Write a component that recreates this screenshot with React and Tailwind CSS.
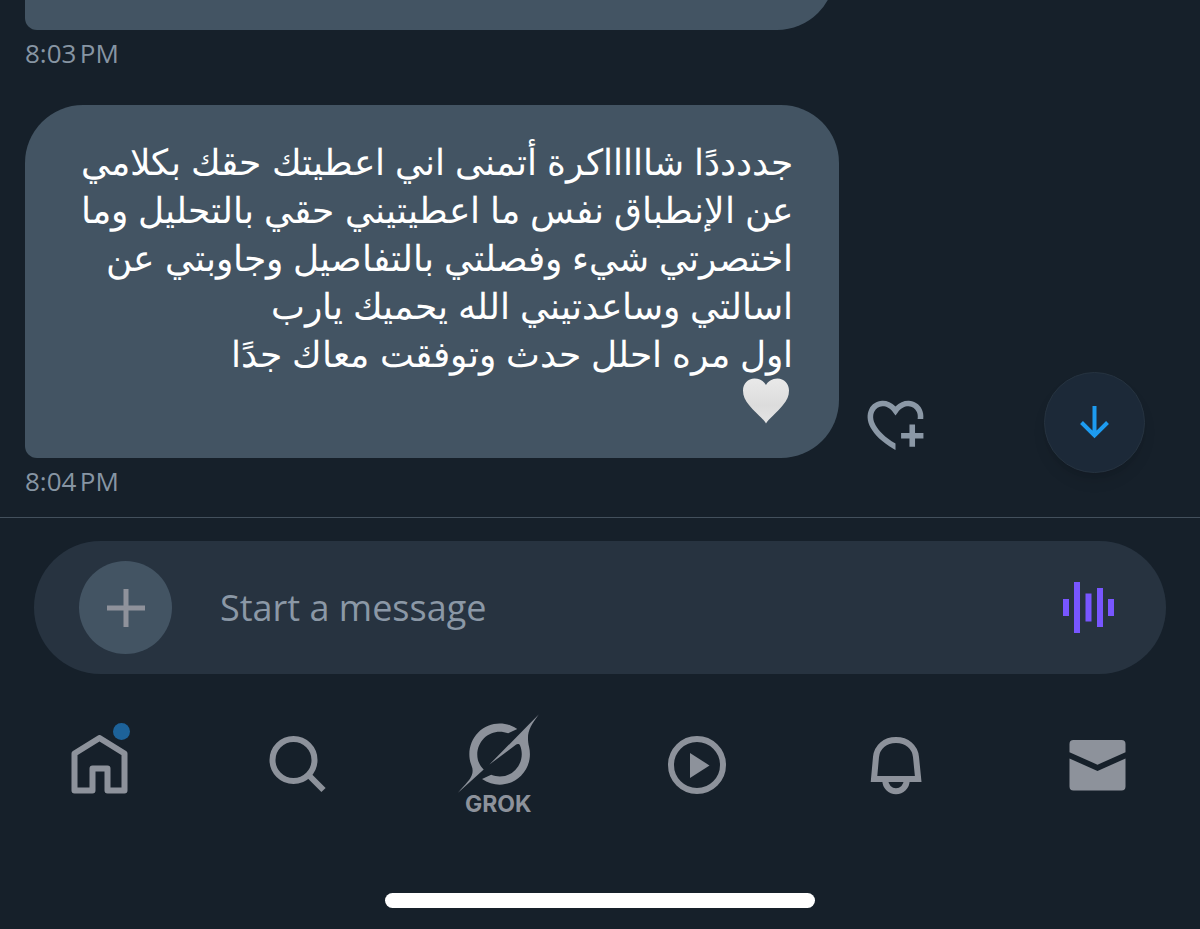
const MESSAGE = [
  `ج${'د'.repeat(4)}ًا ش${'ا'.repeat(5)}كرة أتمنى اني اعطيتك حقك بكلامي`,
  'عن الإنطباق نفس ما اعطيتيني حقي بالتحليل وما',
  'اختصرتي شيء وفصلتي بالتفاصيل وجاوبتي عن',
  'اسالتي وساعدتيني الله يحميك يارب',
  'اول مره احلل حدث وتوفقت معاك جدًا',
];

function WhiteHeart() {
  return (
    <svg role="img" aria-label="🤍" viewBox="0 0 48 48" className="mr-[2px] h-12 w-12">
      <defs>
        <linearGradient id="heart-fill" x1="0" y1="0" x2="0" y2="1">
          <stop offset="0" stopColor="#e9e9e9" />
          <stop offset="0.6" stopColor="#dcdcdc" />
          <stop offset="1" stopColor="#e4e4e4" />
        </linearGradient>
      </defs>
      <path
        d="M21 45.500C18.500 41 10 34.500 4 27 0 22-2 18-2 12.500-2 5.500 3 .5 9.500.5c5.500 0 9.700 3 11.500 6.500C22.800 3.500 27 .5 32.500.5 39 .5 44 5.500 44 12.500c0 5.500-2 9.500-6 14.500C32 34.500 23.500 41 21 45.500z"
        transform="translate(2 0)"
        fill="url(#heart-fill)"
      />
    </svg>
  );
}

function Timestamp({ time }) {
  return <p className="mt-[7px] font-['Open_Sans',sans-serif] text-[26px] leading-8 text-[#8795a3]">{time}</p>;
}

function GrokMark() {
  return (
    <svg aria-hidden="true" viewBox="0 0 33 32" className="h-[79px] w-[81px]" fill="currentColor">
      <path d="M12.745 20.54l10.97-8.19c.539-.4 1.307-.244 1.564.38 1.349 3.288.746 7.241-1.938 9.955-2.683 2.714-6.417 3.31-9.83 1.954l-3.728 1.745c5.347 3.697 11.84 2.782 15.898-1.324 3.219-3.255 4.216-7.692 3.284-11.693l.008.009c-1.351-5.878.332-8.227 3.782-13.031L33 0l-4.54 4.59v-.014L12.743 20.544m-2.263 1.987c-3.837-3.707-3.175-9.446.1-12.755 2.42-2.449 6.388-3.448 9.852-1.979l3.72-1.737c-.67-.49-1.53-1.017-2.515-1.387-4.455-1.854-9.789-.931-13.41 2.728-3.483 3.523-4.579 8.94-2.697 13.561 1.405 3.454-.899 5.898-3.22 8.364C1.49 30.2.666 31.074 0 32l10.478-9.466" />
    </svg>
  );
}

function NavIcon({ children }) {
  return (
    <svg aria-hidden="true" viewBox="0 0 60 60" className="h-[60px] w-[60px]" fill="none" stroke="currentColor" strokeWidth="6">
      {children}
    </svg>
  );
}

function Composer() {
  return (
    <form className="mx-[34px] mt-[23px] flex h-[133px] items-center rounded-full bg-[#273340] pr-[52px] pl-[45px]">
      <button type="button" aria-label="Add attachment" className="flex h-[93px] w-[93px] shrink-0 items-center justify-center rounded-full bg-[#435463] text-[#8f929b]">
        <svg aria-hidden="true" viewBox="0 0 38 38" className="h-[38px] w-[38px]" stroke="currentColor" strokeWidth="5">
          <path d="M19 0v38M0 19h38" />
        </svg>
      </button>
      <input
        type="text"
        aria-label="Message"
        placeholder="Start a message"
        className="ml-12 min-w-0 flex-1 bg-transparent font-['Open_Sans',sans-serif] text-[36px] leading-[48px] text-white outline-none placeholder:text-[#8b98a6]"
      />
      <button type="button" aria-label="Record voice message" className="text-[#7856ff]">
        <svg aria-hidden="true" viewBox="0 0 51 51" className="h-[51px] w-[51px]" fill="currentColor">
          <path d="M0 17h6v17H0zM11 0h6v51h-6zM22.500 11.500h6v28h-6zM34 6h6v39h-6zM45 17h6v17h-6z" />
        </svg>
      </button>
    </form>
  );
}

function TabBar() {
  const item = 'flex justify-center';
  return (
    <nav aria-label="Main" className="mt-10 grid grid-cols-6 items-center pr-1 text-[#8d929b]">
      <a href="#home" aria-label="Home, new posts" className={item}>
        <span className="relative">
          <NavIcon>
            <path strokeLinejoin="round" d="M4.500 18.500L29.500 3l25 15.500V55.500H37.500V33.500h-15V55.500h-18z" />
          </NavIcon>
          <span className="absolute -top-3 right-0 h-[17px] w-[17px] rounded-full bg-[#1d6299]" />
        </span>
      </a>
      <a href="#search" aria-label="Search" className={item}>
        <NavIcon>
          <circle cx="24.500" cy="25" r="21" />
          <path d="M39.500 40L54.500 55" />
        </NavIcon>
      </a>
      <a href="#grok" className="flex flex-col items-center">
        <GrokMark />
        <span className="text-[23px] leading-[22px] font-bold">GROK</span>
      </a>
      <a href="#video" aria-label="Video" className={item}>
        <NavIcon>
          <circle cx="29" cy="30" r="26" />
          <path d="M22 18v25l19.500-12.500z" fill="currentColor" stroke="none" />
        </NavIcon>
      </a>
      <a href="#notifications" aria-label="Notifications" className={item}>
        <NavIcon>
          <path d="M7 44L9 22C10 12 18 5 29 5s19 7 20 17l2.200 22z" />
          <path d="M18.300 45.500a10.700 10.700 0 0 0 21.400 0" />
        </NavIcon>
      </a>
      <a href="#messages" aria-label="Messages" className={item}>
        <NavIcon>
          <path
            fill="currentColor"
            stroke="none"
            d="M7.500 5h48a4 4 0 0 1 4 4v8.200L31.500 29.700 3.500 17.200V9a4 4 0 0 1 4-4zM3.500 23.500L31.500 36 59.500 23.500v28a4 4 0 0 1-4 4h-48a4 4 0 0 1-4-4z"
          />
        </NavIcon>
      </a>
    </nav>
  );
}

export default function App() {
  return (
    <div className="flex h-screen flex-col overflow-hidden bg-[#16202a] font-['Inter','Noto_Sans',sans-serif]">
      <main className="relative flex min-h-0 flex-1 flex-col justify-end overflow-hidden pb-5 pl-[25px]">
        <div className="h-40 w-full max-w-[810px] shrink-0 rounded-[58px] rounded-bl-xl bg-[#435463]" />
        <Timestamp time={'8:03\u202fPM'} />

        <div className="mt-9 flex items-end gap-[23px]">
          <div
            dir="rtl"
            lang="ar"
            className="w-full max-w-[814px] rounded-[58px] rounded-bl-xl bg-[#435463] pt-[33px] pr-[46px] pb-8 pl-10 text-[36px] leading-[48px] text-white"
          >
            <p className="whitespace-pre-line">{MESSAGE.join('\n')}</p>
            <WhiteHeart />
          </div>
          <button type="button" aria-label="Add reaction" className="shrink-0 text-[#8b98a6]">
            <svg aria-hidden="true" viewBox="0 0 24 24" className="h-[67px] w-[67px]" fill="currentColor">
              <path d="M17 12v3h-2.998v2h3v3h2v-3h3v-2h-3.001v-3H17zm-5 6.839c-3.871-2.340-6.053-4.639-7.127-6.609-1.112-2.040-1.031-3.700-.479-4.820.561-1.130 1.667-1.840 2.910-1.910 1.222-.060 2.680.510 3.892 2.160l.806 1.090.805-1.090c1.211-1.650 2.668-2.220 3.890-2.160 1.242.070 2.347.780 2.908 1.910.334.677.490 1.554.321 2.590h2.011c.153-1.283-.039-2.469-.539-3.480-.887-1.790-2.647-2.910-4.601-3.010-1.650-.090-3.367.560-4.796 2.010-1.430-1.450-3.147-2.100-4.798-2.010-1.954.100-3.714 1.220-4.601 3.010-.896 1.810-.846 4.170.514 6.670 1.353 2.480 4.003 5.120 8.382 7.670l.502.299v-2.320z" />
            </svg>
          </button>
        </div>
        <Timestamp time={'8:04\u202fPM'} />

        <button
          type="button"
          aria-label="Scroll to latest"
          className="absolute right-[55px] bottom-11 flex h-[101px] w-[101px] items-center justify-center rounded-full border border-[#263340] bg-[#1c2938] text-[#1d9bf0] shadow-lg"
        >
          <svg aria-hidden="true" viewBox="0 0 34 34" className="h-[34px] w-[34px]" fill="none" stroke="currentColor" strokeWidth="4">
            <path d="M16.500 0v30M3.500 16.500l13 13 13-13" />
          </svg>
        </button>
      </main>

      <footer className="border-t border-[#43505c]">
        <Composer />
        <TabBar />
        <div className="mx-auto mt-[78px] mb-[21px] h-[15px] w-[430px] max-w-full rounded-full bg-white" />
      </footer>
    </div>
  );
}
